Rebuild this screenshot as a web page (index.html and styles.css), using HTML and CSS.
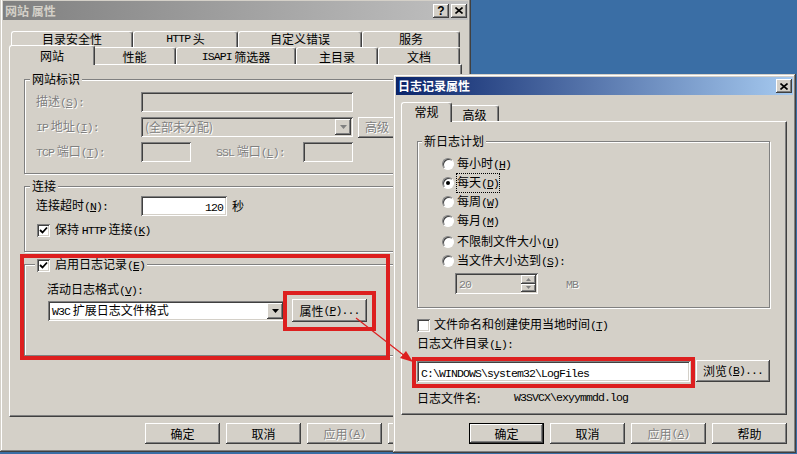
FILE: index.html
```html
<!DOCTYPE html>
<html lang="zh-CN">
<head>
  <meta charset="UTF-8">
  <title>网站 属性</title>
  <link rel="stylesheet" href="styles.css">
</head>
<body>
<div class="screen">

  <!-- website properties dialog (inactive, behind) -->
  <div class="win win-main">
    <div class="titlebar inactive">
      <span class="title">网站 属性</span>
      <span class="cbtn raised help">?</span>
      <span class="cbtn raised close">
        <svg width="8" height="7" viewBox="0 0 8 7"><path d="M0.5 0.5L7.5 6.5M7.5 0.5L0.5 6.5" stroke="#000" stroke-width="1.6" fill="none"/></svg>
      </span>
    </div>

    <div class="tabs tabs-main">
      <div class="tab-row back">
        <div class="tab">目录安全性</div>
        <div class="tab"><span class="en">HTTP</span>&nbsp;头</div>
        <div class="tab">自定义错误</div>
        <div class="tab">服务</div>
      </div>
      <div class="tab-row front">
        <div class="tab sel">网站</div>
        <div class="tab">性能</div>
        <div class="tab"><span class="en">ISAPI</span>&nbsp;筛选器</div>
        <div class="tab">主目录</div>
        <div class="tab">文档</div>
      </div>
    </div>

    <div class="panel panel-main">
      <div class="group grp-ident">
        <span class="legend">网站标识</span>
        <div class="row">
          <span class="lbl dis">描述<span class="ak">(<u>S</u>):</span></span>
          <div class="field sunken off w212"></div>
        </div>
        <div class="row">
          <span class="lbl dis"><span class="en">IP</span> 地址<span class="ak">(<u>I</u>):</span></span>
          <div class="combo sunken off w212">
            <span class="combo-text dis">(全部未分配)</span>
            <span class="combo-btn raised">
              <svg width="7" height="4" viewBox="0 0 7 4"><path d="M0 0H7L3.5 4Z" fill="#808080"/></svg>
            </span>
          </div>
          <div class="btn raised btn-adv dis">高级</div>
        </div>
        <div class="row">
          <span class="lbl dis"><span class="en">TCP</span> 端口<span class="ak">(<u>T</u>):</span></span>
          <div class="field sunken off w50"></div>
          <span class="lbl-ssl dis"><span class="en">SSL</span> 端口<span class="ak">(<u>L</u>):</span></span>
          <div class="field sunken off w50"></div>
        </div>
      </div>

      <div class="group grp-conn">
        <span class="legend">连接</span>
        <div class="row">
          <span class="lbl">连接超时<span class="ak">(<u>N</u>):</span></span>
          <div class="field sunken w86 num"><span class="en">120</span></div>
          <span class="unit">秒</span>
        </div>
        <div class="row row-check">
          <span class="check sunken">
            <svg width="9" height="9" viewBox="0 0 9 9"><path d="M1 4L3.5 6.5L8 1.5" stroke="#000" stroke-width="1.8" fill="none"/></svg>
          </span>
          <span>保持 <span class="en">HTTP</span> 连接<span class="ak">(<u>K</u>)</span></span>
        </div>
      </div>

      <div class="group grp-log">
        <span class="legend legend-check">
          <span class="check sunken">
            <svg width="9" height="9" viewBox="0 0 9 9"><path d="M1 4L3.5 6.5L8 1.5" stroke="#000" stroke-width="1.8" fill="none"/></svg>
          </span>
          <span>启用日志记录<span class="ak">(<u>E</u>)</span></span>
        </span>
        <div class="lbl-line">活动日志格式<span class="ak">(<u>V</u>):</span></div>
        <div class="row row-format">
          <div class="combo sunken w237">
            <span class="combo-text"><span class="en">W3C</span> 扩展日志文件格式</span>
            <span class="combo-btn raised">
              <svg width="7" height="4" viewBox="0 0 7 4"><path d="M0 0H7L3.5 4Z" fill="#000"/></svg>
            </span>
          </div>
          <div class="btn raised btn-props">属性<span class="ak">(<u>P</u>)...</span></div>
        </div>
      </div>
    </div>

    <div class="btn-row btn-row-main">
      <div class="btn raised">确定</div>
      <div class="btn raised">取消</div>
      <div class="btn raised dis">应用<span class="ak">(<u>A</u>)</span></div>
      <div class="btn raised">帮助</div>
    </div>
  </div>

  <!-- logging properties dialog (active, in front) -->
  <div class="win win-log">
    <div class="titlebar active">
      <span class="title">日志记录属性</span>
      <span class="cbtn raised close">
        <svg width="8" height="7" viewBox="0 0 8 7"><path d="M0.5 0.5L7.5 6.5M7.5 0.5L0.5 6.5" stroke="#000" stroke-width="1.6" fill="none"/></svg>
      </span>
    </div>

    <div class="tabs tabs-log">
      <div class="tab-row front">
        <div class="tab sel">常规</div>
        <div class="tab">高级</div>
      </div>
    </div>

    <div class="panel panel-log">
      <div class="group grp-plan">
        <span class="legend">新日志计划</span>
        <div class="opt"><span class="radio"></span><span>每小时<span class="ak">(<u>H</u>)</span></span></div>
        <div class="opt"><span class="radio on"></span><span class="focus">每天<span class="ak">(<u>D</u>)</span></span></div>
        <div class="opt"><span class="radio"></span><span>每周<span class="ak">(<u>W</u>)</span></span></div>
        <div class="opt"><span class="radio"></span><span>每月<span class="ak">(<u>M</u>)</span></span></div>
        <div class="opt opt-gap"><span class="radio"></span><span>不限制文件大小<span class="ak">(<u>U</u>)</span></span></div>
        <div class="opt"><span class="radio"></span><span>当文件大小达到<span class="ak">(<u>S</u>):</span></span></div>
        <div class="row row-spin">
          <div class="spin sunken off">
            <span class="spin-text dis"><span class="en">20</span></span>
            <span class="spin-btns">
              <span class="spin-btn raised"><svg width="5" height="3" viewBox="0 0 5 3"><path d="M0 3H5L2.5 0Z" fill="#808080"/></svg></span>
              <span class="spin-btn raised"><svg width="5" height="3" viewBox="0 0 5 3"><path d="M0 0H5L2.5 3Z" fill="#808080"/></svg></span>
            </span>
          </div>
          <span class="unit-mb dis"><span class="en">MB</span></span>
        </div>
      </div>

      <div class="row row-local">
        <span class="check sunken"></span>
        <span>文件命名和创建使用当地时间<span class="ak">(<u>T</u>)</span></span>
      </div>
      <div class="lbl-line lbl-dir">日志文件目录<span class="ak">(<u>L</u>):</span></div>
      <div class="row row-path">
        <div class="field sunken w273"><span class="en path">C:\WINDOWS\system32\LogFiles</span></div>
        <div class="btn raised btn-browse">浏览<span class="ak">(<u>B</u>)...</span></div>
      </div>
      <div class="row row-name">
        <span class="lbl-name">日志文件名:</span>
        <span class="en">W3SVCX\exyymmdd.log</span>
      </div>
    </div>

    <div class="btn-row btn-row-log">
      <div class="btn raised default">确定</div>
      <div class="btn raised">取消</div>
      <div class="btn raised dis">应用<span class="ak">(<u>A</u>)</span></div>
      <div class="btn raised">帮助</div>
    </div>
  </div>

  <!-- red highlight marks drawn over the screenshot -->
  <div class="mark mark-log"></div>
  <div class="mark mark-props"></div>
  <div class="mark mark-path"></div>
  <svg class="arrow" width="70" height="56" viewBox="0 0 70 56">
    <path d="M6 6L56 45" stroke="#DD1F1F" stroke-width="1.2" fill="none"/>
    <path d="M63 50L50 46L56 39Z" fill="#DD1F1F"/>
  </svg>
</div>
</body>
</html>
```

FILE: styles.css
```css
* {
  box-sizing: border-box;
  margin: 0;
  padding: 0;
}

body {
  font-family: "Noto Sans CJK SC", "Noto Sans", sans-serif;
  font-size: 12px;
  line-height: 16px;
  color: #000;
  background: #3A6EA5;
}

.screen {
  position: relative;
  width: 797px;
  height: 454px;
  overflow: hidden;
}

/* latin runs look like the half-width glyphs of the old system font */
.en, .ak {
  font-family: "Liberation Mono", monospace;
  font-size: 11.5px;
  letter-spacing: -0.9px;
}
u {
  text-underline-offset: 1px;
}

/* classic 3d edges */
.raised {
  background: #D4D0C8;
  box-shadow: inset -1px -1px #404040, inset 1px 1px #fff, inset -2px -2px #808080, inset 2px 2px #D4D0C8;
}
.sunken {
  background: #fff;
  box-shadow: inset 1px 1px #808080, inset -1px -1px #fff, inset 2px 2px #404040, inset -2px -2px #D4D0C8;
}
.sunken.off {
  background: #D4D0C8;
}
.dis {
  color: #808080;
  text-shadow: 1px 1px 0 #fff;
}

/* windows */
.win {
  position: absolute;
  display: flex;
  flex-direction: column;
  padding: 3px;
  background: #D4D0C8;
  box-shadow: inset -1px -1px #404040, inset 1px 1px #D4D0C8, inset -2px -2px #808080, inset 2px 2px #fff;
}
.win-main {
  left: 0;
  top: -2px;
  width: 471px;
  height: 454px;
}
.win-log {
  left: 393px;
  top: 74px;
  width: 403px;
  height: 379px;
}

.titlebar {
  display: flex;
  align-items: center;
  height: 18px;
  padding-left: 2px;
  font-weight: bold;
  flex-shrink: 0;
}
.win-main .titlebar {
  height: 19px;
}
.titlebar.inactive {
  background: linear-gradient(to right, #808080, #C0C0C0);
  color: #D4D0C8;
}
.titlebar.active {
  background: linear-gradient(to right, #0A246A, #A6CAF0);
  color: #fff;
}
.title {
  flex: 1;
}
.cbtn {
  display: flex;
  align-items: center;
  justify-content: center;
  width: 16px;
  height: 14px;
  margin-right: 1px;
  font-family: "Liberation Sans", sans-serif;
  font-size: 12px;
  font-weight: bold;
  color: #000;
}
.cbtn.help {
  margin-right: 2px;
}

/* tab strips */
.tab-row {
  display: grid;
  padding-left: 2px;
}
.tab {
  display: flex;
  align-items: center;
  justify-content: center;
  line-height: 13px;
  background: #D4D0C8;
  border-top: 1px solid #fff;
  border-left: 1px solid #fff;
  border-right: 1px solid #404040;
  border-radius: 3px 3px 0 0;
  box-shadow: inset -1px 0 #808080;
  white-space: nowrap;
}
.tab.sel {
  position: relative;
  z-index: 1;
  align-self: start;
  height: 20px;
  margin: -2px -2px 0;
}
.back .tab {
  padding-bottom: 2px;
}

.tabs-main {
  margin: 11px 0 0 6px;
}
.tabs-main .back {
  height: 16px;
  grid-template-columns: 122px 105px 124px 98px;
}
.tabs-main .front {
  height: 17px;
  grid-template-columns: 82px 83px 120px 82px 82px;
}
.tabs-log {
  margin: 10px 0 0 5px;
}
.tabs-log .front {
  height: 16px;
  grid-template-columns: 47px 49px;
}
.tabs-log .tab.sel {
  margin-top: -3px;
  height: 20px;
  padding-bottom: 2px;
}

/* tab page */
.panel {
  border-top: 1px solid #fff;
  border-left: 1px solid #fff;
  border-right: 1px solid #404040;
  border-bottom: 1px solid #404040;
  box-shadow: inset -1px -1px #808080;
  flex-shrink: 0;
}
.panel-main {
  width: 453px;
  height: 353px;
  margin-left: 6px;
  padding: 14px 0 0 14px;
}
.panel-log {
  width: 386px;
  height: 294px;
  margin-left: 5px;
  padding: 19px 0 0 15px;
}

/* group boxes */
.group {
  position: relative;
  border: 1px solid #808080;
  box-shadow: inset 1px 1px #fff, 1px 1px #fff;
}
.legend {
  position: absolute;
  top: -9px;
  left: 5px;
  padding: 0 2px;
  background: #D4D0C8;
  white-space: nowrap;
}
.legend-check {
  display: flex;
  align-items: center;
  gap: 5px;
  left: 10px;
}

.grp-ident {
  width: 423px;
  height: 95px;
  padding: 12px 0 0 11px;
}
.grp-conn {
  width: 423px;
  height: 66px;
  margin-top: 12px;
  padding: 9px 0 0 11px;
}
.grp-log {
  width: 423px;
  height: 92px;
  margin-top: 12px;
  padding: 16px 0 0 22px;
}
.grp-plan {
  width: 353px;
  height: 167px;
  padding: 12px 0 0 24px;
}
.grp-plan .legend {
  left: 4px;
}

/* rows and controls */
.row {
  display: flex;
  align-items: center;
  height: 20px;
  white-space: nowrap;
}
.row + .row {
  margin-top: 5px;
}
.lbl {
  width: 105px;
}
.lbl-ssl {
  width: 87px;
  margin-left: 25px;
}
.unit {
  margin-left: 5px;
}
.row-check {
  height: 18px;
  margin-left: 1px;
  gap: 5px;
}
.lbl-line {
  height: 16px;
  white-space: nowrap;
}
.row-format {
  height: 23px;
  margin: 2px 0 0 1px;
  gap: 7px;
}

.field {
  height: 20px;
  padding: 2px 4px;
  white-space: nowrap;
}
.field.num {
  text-align: right;
}
.w50 { width: 50px; }
.w86 { width: 86px; }
.w212 { width: 212px; }
.w237 { width: 237px; }
.w273 { width: 273px; height: 21px; }

.combo {
  display: flex;
  align-items: center;
  height: 20px;
  padding: 2px;
}
.combo-text {
  flex: 1;
  padding-left: 2px;
  overflow: hidden;
  white-space: nowrap;
}
.combo-btn {
  display: flex;
  align-items: center;
  justify-content: center;
  width: 16px;
  height: 16px;
}

.check {
  display: flex;
  align-items: center;
  justify-content: center;
  width: 13px;
  height: 13px;
  flex-shrink: 0;
}

.btn {
  display: flex;
  align-items: center;
  justify-content: center;
  width: 75px;
  height: 21px;
  white-space: nowrap;
}
.btn.default {
  border: 1px solid #000;
}
.btn-adv {
  margin-left: 5px;
  height: 21px;
  justify-content: flex-start;
  padding-left: 7px;
}
.btn-props {
  height: 23px;
}
.btn-browse {
  width: 74px;
  height: 22px;
  margin-left: 6px;
}

.btn-row {
  display: flex;
  justify-content: flex-end;
  gap: 6px;
}
.btn-row-main {
  margin-top: 6px;
  padding-right: 5px;
}
.btn-row-log {
  margin-top: 8px;
  padding-right: 6px;
}

/* radio list */
.opt {
  display: flex;
  align-items: center;
  gap: 3px;
  height: 19px;
  white-space: nowrap;
}
.opt-gap {
  margin-top: 2px;
}
.radio {
  position: relative;
  width: 12px;
  height: 12px;
  border-radius: 50%;
  background: #fff;
  border: 1px solid;
  border-color: #808080 #fff #fff #808080;
  box-shadow: inset 1px 1px #404040;
  flex-shrink: 0;
}
.radio.on::after {
  content: "";
  position: absolute;
  left: 3px;
  top: 3px;
  width: 4px;
  height: 4px;
  border-radius: 50%;
  background: #000;
}
.focus {
  outline: 1px dotted #000;
  outline-offset: 0;
}

.row-spin {
  height: 21px;
  margin-top: 3px;
  padding-left: 13px;
}
.spin {
  display: flex;
  width: 83px;
  height: 21px;
  padding: 2px;
}
.spin-text {
  flex: 1;
  padding-left: 2px;
}
.spin-btns {
  display: flex;
  flex-direction: column;
  width: 15px;
}
.spin-btn {
  display: flex;
  align-items: center;
  justify-content: center;
  flex: 1;
}
.unit-mb {
  margin-left: 28px;
}

.panel-log .row-local {
  height: 18px;
  margin-top: 8px;
  gap: 4px;
}
.lbl-dir {
  margin-top: 1px;
}
.panel-log .row-path {
  height: 22px;
  margin-top: 9px;
}
.path {
  position: relative;
  top: 1px;
}
.panel-log .row-name {
  height: 16px;
  margin-top: 8px;
}
.lbl-name {
  width: 97px;
}

/* annotation overlays */
.mark {
  position: absolute;
  border: 4px solid #DD1F1F;
}
.mark-log {
  left: 20px;
  top: 254px;
  width: 370px;
  height: 106px;
}
.mark-props {
  left: 283px;
  top: 291px;
  width: 93px;
  height: 40px;
}
.mark-path {
  left: 412px;
  top: 357px;
  width: 283px;
  height: 31px;
}
.arrow {
  position: absolute;
  left: 350px;
  top: 312px;
}
```
